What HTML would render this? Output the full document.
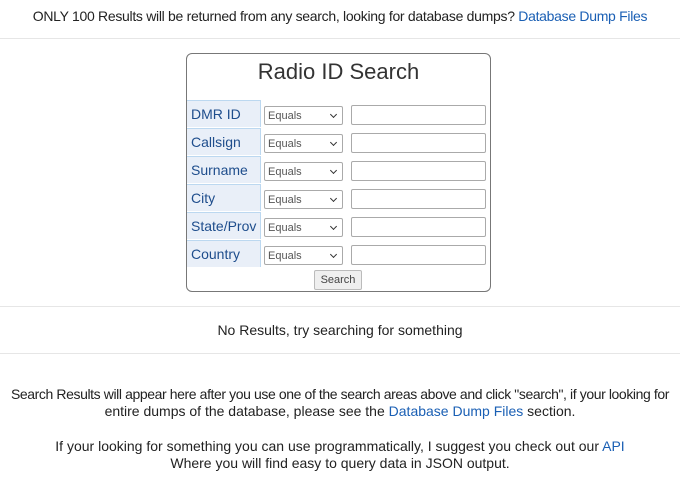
<!DOCTYPE html>
<html><head><style>
body{margin:0;width:680px;height:480px;background:#fff;font-family:"Liberation Sans",sans-serif;color:#222;font-size:14px;overflow:hidden}
a{color:#1a5fb4;text-decoration:none}
.t{position:absolute;left:0;width:680px;text-align:center;line-height:17px;white-space:nowrap}
.hr{position:absolute;left:0;width:680px;height:1px;background:#e6e6e6}
.box{position:absolute;left:186px;top:53px;width:303px;height:237px;border:1px solid #777;border-radius:6px}
.title{position:absolute;left:0;top:5px;width:303px;text-align:center;font-size:22px;color:#333}
.lab{position:absolute;left:0;height:27px;background:#e9eff8;border-top:1px solid #bcd8f0;border-right:1px solid #bcd8f0;color:#1e4d8c;font-size:14px;line-height:27px;padding-left:4px;box-sizing:border-box;width:74px}
.sel{position:absolute;left:77px;width:79px;height:19px;border:1px solid #aaa;border-radius:2px;box-sizing:border-box;font-size:11px;color:#555;line-height:19px;padding-left:3px}
.sel:after{content:"";position:absolute;right:6px;top:5px;width:4px;height:4px;border-right:1.5px solid #333;border-bottom:1.5px solid #333;transform:rotate(45deg)}
.inp{position:absolute;left:164px;width:135px;height:20px;border:1px solid #aaa;border-radius:2px;box-sizing:border-box}
.btn{position:absolute;left:127px;top:216px;width:48px;height:20px;border:1px solid #bbb;background:#efefef;border-radius:2px;box-sizing:border-box;font-size:11px;color:#444;text-align:center;line-height:18px}
</style></head><body>
<div class="t" style="top:8px;letter-spacing:-0.3px">ONLY 100 Results will be returned from any search, looking for database dumps? <a>Database Dump Files</a></div>
<div class="hr" style="top:38px"></div>
<div class="box">
<div class="title">Radio ID Search</div>
<div class="lab" style="top:46px">DMR ID</div><div class="sel" style="top:52px">Equals</div><div class="inp" style="top:51px"></div>
<div class="lab" style="top:74px">Callsign</div><div class="sel" style="top:80px">Equals</div><div class="inp" style="top:79px"></div>
<div class="lab" style="top:102px">Surname</div><div class="sel" style="top:108px">Equals</div><div class="inp" style="top:107px"></div>
<div class="lab" style="top:130px">City</div><div class="sel" style="top:136px">Equals</div><div class="inp" style="top:135px"></div>
<div class="lab" style="top:158px">State/Prov</div><div class="sel" style="top:164px">Equals</div><div class="inp" style="top:163px"></div>
<div class="lab" style="top:186px">Country</div><div class="sel" style="top:192px">Equals</div><div class="inp" style="top:191px"></div>
<div class="btn">Search</div>
</div>
<div class="hr" style="top:306px"></div>
<div class="t" style="top:322px">No Results, try searching for something</div>
<div class="hr" style="top:353px"></div>
<div class="t" style="top:386px;letter-spacing:-0.4px">Search Results will appear here after you use one of the search areas above and click "search", if your looking for</div>
<div class="t" style="top:403px">entire dumps of the database, please see the <a>Database Dump Files</a> section.</div>
<div class="t" style="top:438px">If your looking for something you can use programmatically, I suggest you check out our <a>API</a></div>
<div class="t" style="top:455px">Where you will find easy to query data in JSON output.</div>
</body></html>
